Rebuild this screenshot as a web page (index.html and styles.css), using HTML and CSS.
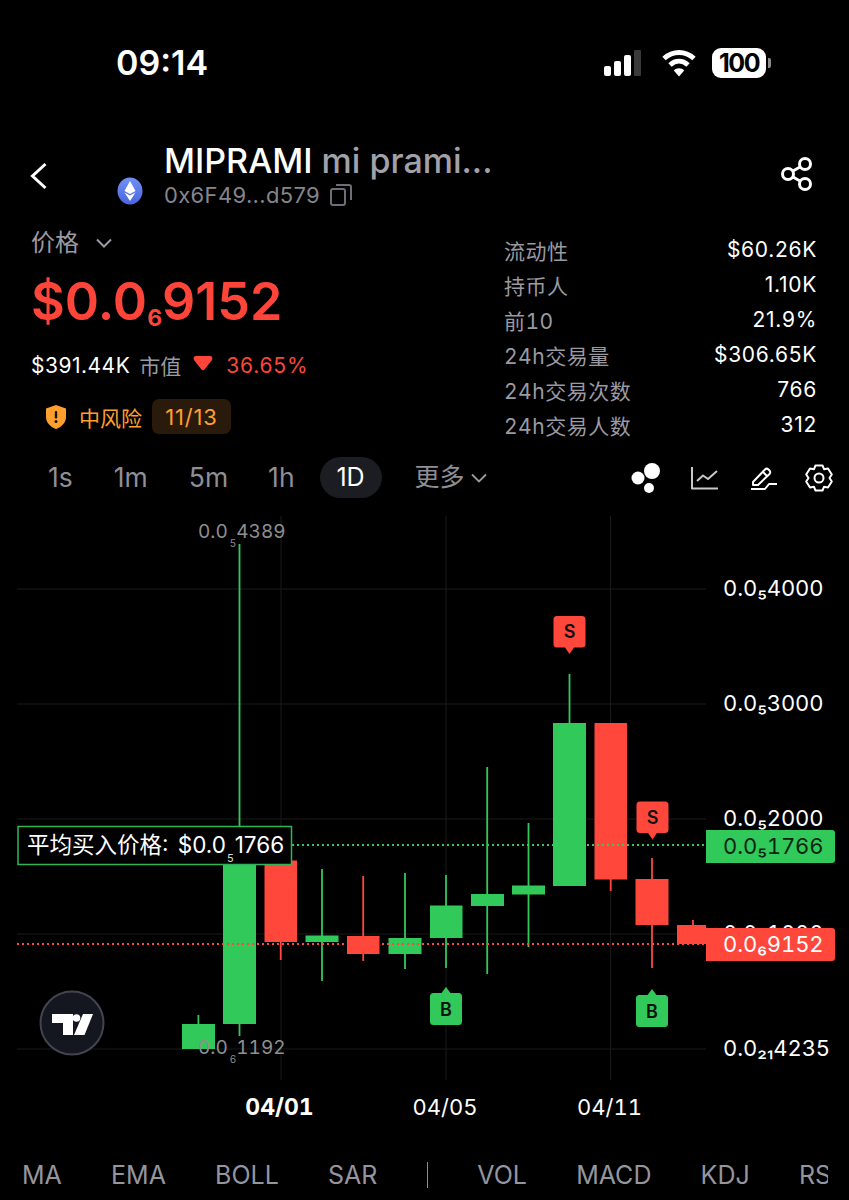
FILE: index.html
```html
<!DOCTYPE html>
<html lang="zh">
<head>
<meta charset="utf-8">
<title>MIPRAMI</title>
<link rel="stylesheet" href="styles.css">
</head>
<body>
<div class="page">
  <div class="status">
    <span class="clock">09:14</span>
    <div class="status-icons">
      <svg class="signal" viewBox="0 0 37 26"><rect x="0" y="16" width="7" height="10" rx="2" class="w"/><rect x="10" y="11" width="7" height="15" rx="2" class="w"/><rect x="20" y="5" width="7" height="21" rx="2" class="w"/><rect x="30" y="0" width="7" height="26" rx="1" class="dim"/></svg>
      <svg class="wifi" viewBox="0 0 36 28"><path class="wifi-s" d="M3 9.500C12 1.500 24 1.500 33 9.500"/><path class="wifi-s" d="M9 16C14.500 11 21.500 11 27 16"/><path class="w" d="M18 27.500L12.800 21.500C15.500 18.500 20.500 18.500 23.200 21.500Z"/></svg>
      <div class="battery"><span class="bat-num">100</span></div><span class="bat-tip"></span>
    </div>
  </div>

  <header class="head">
    <svg class="back" viewBox="0 0 18 28"><path d="M15.500 2L2.500 14L15.500 26"/></svg>
    <svg class="eth" viewBox="0 0 28 28">
      <defs><linearGradient id="ethg" x1="0" y1="0" x2="0" y2="1"><stop offset="0" stop-color="#7290f5"/><stop offset="1" stop-color="#4a66e0"/></linearGradient></defs>
      <ellipse cx="14" cy="14" rx="12.500" ry="13.500" fill="url(#ethg)"/><path class="w" d="M14 4L8.500 14L14 17L19.500 14Z"/><path class="w" d="M14 18.500L8.500 15.500L14 24L19.500 15.500Z"/></svg>
    <div class="head-text">
      <div class="title">MIPRAMI <span class="title-sub">mi prami...</span></div>
      <div class="addr">0x6F49...d579
        <svg class="copy" viewBox="0 0 22 22"><rect x="1" y="5" width="14" height="16" rx="2"/><path d="M6 1H19A2 2 0 0 1 21 3V16"/></svg>
      </div>
    </div>
    <svg class="share" viewBox="0 0 32 34"><circle cx="7" cy="17" r="5.500"/><circle cx="24" cy="7" r="5.500"/><circle cx="24" cy="27" r="5.500"/><path d="M12 14L19 10M12 20L19 24"/></svg>
  </header>

  <section class="info">
    <div class="left">
      <div class="price-label">价格<svg class="chev" viewBox="0 0 16 10"><path d="M1 1.500L8 8.500L15 1.500"/></svg></div>
      <div class="price">$0.0<span class="price-sub">6</span>9152</div>
      <div class="market"><span class="mc">$391.44K</span><span class="mc-label">市值</span><svg class="down" viewBox="0 0 20 16"><path d="M3 1C1 1 0 3 1 5L8.500 14.500C9.300 15.500 10.700 15.500 11.500 14.500L19 5C20 3 19 1 17 1Z"/></svg><span class="pct">36.65%</span></div>
      <div class="risk">
        <svg class="shield" viewBox="0 0 20 24"><path class="shield-bg" d="M10 0L20 3.500V12C20 18 15 22 10 24C5 22 0 18 0 12V3.500Z"/><rect class="shield-m" x="8.800" y="6" width="2.400" height="7.500" rx="1"/><circle class="shield-m" cx="10" cy="16.500" r="1.500"/></svg>
        <span class="risk-text">中风险</span>
        <span class="risk-badge">11/13</span>
      </div>
    </div>
    <dl class="stats">
      <div class="row"><dt>流动性</dt><dd>$60.26K</dd></div>
      <div class="row"><dt>持币人</dt><dd>1.10K</dd></div>
      <div class="row"><dt>前10</dt><dd>21.9%</dd></div>
      <div class="row"><dt>24h交易量</dt><dd>$306.65K</dd></div>
      <div class="row"><dt>24h交易次数</dt><dd>766</dd></div>
      <div class="row"><dt>24h交易人数</dt><dd>312</dd></div>
    </dl>
  </section>

  <nav class="tabs">
    <span class="tab t1">1s</span>
    <span class="tab t2">1m</span>
    <span class="tab t3">5m</span>
    <span class="tab t4">1h</span>
    <span class="tab active">1D</span>
    <span class="tab more">更多<svg class="chev small" viewBox="0 0 16 10"><path d="M1 1.500L8 8.500L15 1.500"/></svg></span>
    <div class="tools">
      <svg class="tool t-dots" viewBox="0 0 30 30"><circle cx="7" cy="15" r="6.500" class="w"/><circle cx="21" cy="8" r="8" class="w"/><circle cx="18" cy="25" r="5" class="w"/></svg>
      <svg class="tool t-line" viewBox="0 0 28 24"><path d="M1 1V22.500H27"/><path d="M6 15L12 9.500L17 13L26 5"/></svg>
      <svg class="tool t-pen" viewBox="0 0 28 24"><path d="M3 16L15 3.500C16 2.500 17.500 2.500 18.500 3.500L19.500 4.500C20.500 5.500 20.500 7 19.500 8L8 19H3Z"/><path d="M13 6L17.500 10.500"/><path d="M1 23H15L19 18H27"/></svg>
      <svg class="tool t-gear" viewBox="0 0 30 30"><path d="M11.500 2.500H18.500L20 6.200L24 5.500L27.800 11.500L25.500 15L27.800 18.500L24 24.500L20 23.800L18.500 27.500H11.500L10 23.800L6 24.500L2.200 18.500L4.500 15L2.200 11.500L6 5.500L10 6.200Z"/><circle cx="15" cy="15" r="4.500"/></svg>
    </div>
  </nav>

  <div class="chart">
    <svg class="chart-svg" viewBox="0 510 849 640">
      <g class="grid">
        <path d="M17 589H706M17 704H706M17 819H706M17 934H706M17 1049H706"/>
        <path d="M281 516V1080M446 516V1080M610.500 516V1080"/>
      </g>

      <g class="up">
        <rect x="197.500" y="1015" width="1.800" height="10"/><rect x="182" y="1024" width="33" height="25"/>
        <rect x="238.600" y="544" width="1.800" height="492"/><rect x="223" y="860" width="33" height="164"/>
        <rect x="321.100" y="869" width="1.800" height="112"/><rect x="305.500" y="935.500" width="33" height="6.500"/>
        <rect x="404.100" y="873" width="1.800" height="96"/><rect x="388.500" y="938" width="33" height="16"/>
        <rect x="445.100" y="875" width="1.800" height="93"/><rect x="430" y="905.500" width="32.500" height="32.500"/>
        <rect x="486.300" y="767" width="1.800" height="207"/><rect x="471" y="894" width="33" height="12"/>
        <rect x="527.600" y="823" width="1.800" height="124"/><rect x="512" y="885.500" width="33" height="9"/>
        <rect x="568.600" y="674" width="1.800" height="50"/><rect x="553" y="723" width="33" height="163"/>
      </g>
      <g class="down-c">
        <rect x="279.800" y="860" width="1.800" height="100"/><rect x="264.500" y="860.500" width="32.500" height="81.500"/>
        <rect x="362.300" y="876" width="1.800" height="85"/><rect x="347" y="936" width="32.500" height="18"/>
        <rect x="609.800" y="723" width="1.800" height="168"/><rect x="594.500" y="723" width="32.500" height="156.500"/>
        <rect x="651.100" y="858" width="1.800" height="110"/><rect x="635.500" y="879" width="33" height="46"/>
        <rect x="692.100" y="920" width="1.800" height="6"/><rect x="677" y="925" width="29" height="19"/>
      </g>

      <path class="dot-g" d="M292 845H706"/>
      <path class="dot-r" d="M17 944H706"/>

      <text class="axis" x="723" y="596">0.0₅4000</text>
      <text class="axis" x="723" y="711">0.0₅3000</text>
      <text class="axis" x="723" y="826">0.0₅2000</text>
      <text class="axis" x="723" y="941">0.0₅1000</text>
      <text class="axis" x="723" y="1056">0.0₂₁4235</text>

      <path class="tag-g" d="M706 830H832A3 3 0 0 1 835 833V860A3 3 0 0 1 832 863H706Z"/>
      <text class="tag-text dark" x="723" y="854">0.0₅1766</text>
      <path class="tag-r" d="M706 928H832A3 3 0 0 1 835 931V958A3 3 0 0 1 832 961H706Z"/>
      <text class="tag-text" x="723" y="952">0.0₆9152</text>

      <rect class="avg-box" x="18" y="826.500" width="273.500" height="38"/>
      <text class="avg" x="27" y="853">平均买入价格: <tspan dx="3">$0.0</tspan><tspan class="tiny" dx="1" dy="9">5</tspan><tspan dx="1" dy="-9">1766</tspan></text>

      <text class="extreme" x="198" y="538">0.0<tspan class="tiny-g" dx="2" dy="9">5</tspan><tspan dy="-9">4389</tspan></text>
      <text class="extreme" x="198" y="1054">0.0<tspan class="tiny-g" dx="2" dy="9">6</tspan><tspan dy="-9">1192</tspan></text>

      <g class="mark-r">
        <path d="M557 616H582A3.500 3.500 0 0 1 585.500 619.500V644A3.500 3.500 0 0 1 582 647.500H574L569.500 654L565 647.500H557A3.500 3.500 0 0 1 553.500 644V619.500A3.500 3.500 0 0 1 557 616Z"/>
        <path d="M640 801.500H665A3.500 3.500 0 0 1 668.500 805V829.500A3.500 3.500 0 0 1 665 833H657L652.500 839.500L648 833H640A3.500 3.500 0 0 1 636.500 829.500V805A3.500 3.500 0 0 1 640 801.500Z"/>
      </g>
      <g class="mark-g">
        <path d="M433.500 993H441.500L446 987L450.500 993H458.500A3.500 3.500 0 0 1 462 996.500V1021.500A3.500 3.500 0 0 1 458.500 1025H433.500A3.500 3.500 0 0 1 430 1021.500V996.500A3.500 3.500 0 0 1 433.500 993Z"/>
        <path d="M639.500 995H647.500L652 989L656.500 995H664.500A3.500 3.500 0 0 1 668 998.500V1023.500A3.500 3.500 0 0 1 664.500 1027H639.500A3.500 3.500 0 0 1 636 1023.500V998.500A3.500 3.500 0 0 1 639.500 995Z"/>
      </g>
      <text class="mark-t" x="569.500" y="638">S</text>
      <text class="mark-t" x="652.500" y="823.500">S</text>
      <text class="mark-t" x="446" y="1015.500">B</text>
      <text class="mark-t" x="652" y="1017.500">B</text>

      <circle class="tv-bg" cx="72" cy="1023" r="31.500"/>
      <path class="w" d="M52 1014H73V1035H63V1023H52Z"/>
      <circle class="w" cx="76.500" cy="1018" r="3.800"/>
      <path class="w" d="M83 1014H93L84.500 1035H74Z"/>

      <text class="xl bold" x="279.500" y="1115">04/01</text>
      <text class="xl" x="445" y="1115">04/05</text>
      <text class="xl" x="609.500" y="1115">04/11</text>
    </svg>
  </div>

  <div class="indicators">
    <span>MA</span><span>EMA</span><span>BOLL</span><span>SAR</span><i class="divider"></i><span>VOL</span><span>MACD</span><span>KDJ</span><span>RSI</span>
  </div>
</div>
</body>
</html>
```
FILE: styles.css
```css
* { box-sizing: border-box; margin: 0; padding: 0; }
html, body { background: #000; }
body { font-family: Inter, "Noto Sans CJK SC", sans-serif; color: #fff; }
.page { width: 849px; height: 1200px; overflow: hidden; position: relative; display: flex; flex-direction: column; }
.w { fill: #fff; }

.status { height: 140px; padding: 45px 78px 0 116px; display: flex; justify-content: space-between; align-items: flex-start; }
.clock { font-size: 34px; font-weight: 600; line-height: 36px; }
.status-icons { display: flex; align-items: center; gap: 0; height: 36px; }
.signal { width: 37px; height: 26px; margin-right: 20px; }
.signal .dim { fill: #3a3a3c; }
.wifi { width: 36px; height: 28px; margin-right: 15px; }
.wifi-s { fill: none; stroke: #fff; stroke-width: 5; }
.battery { width: 54px; height: 30px; background: #fff; border-radius: 9px; display: flex; align-items: center; justify-content: center; }
.bat-num { color: #000; font-size: 25px; font-weight: 700; letter-spacing: -1.5px; }
.bat-tip { width: 3px; height: 10px; background: #8c8c8c; border-radius: 0 2px 2px 0; margin-left: 2px; }

.head { position: relative; height: 72px; display: flex; padding-left: 164px; }
.back { position: absolute; left: 30px; top: 22px; width: 18px; height: 28px; fill: none; stroke: #fff; stroke-width: 3; }
.eth { position: absolute; left: 116px; top: 37px; width: 28px; height: 28px; }
.head-text { flex: 1; }
.title { font-size: 34px; font-weight: 500; line-height: 42px; }
.title-sub { color: #a1a1aa; font-weight: 500; }
.addr { color: #85858d; font-size: 22px; line-height: 28px; display: flex; align-items: center; gap: 10px; margin-top: -1px; letter-spacing: 0.35px; }
.copy { width: 22px; height: 22px; fill: none; stroke: #6e6e75; stroke-width: 2; }
.share { position: absolute; left: 781px; top: 17px; width: 32px; height: 34px; fill: none; stroke: #fff; stroke-width: 3; }

.info { height: 233px; padding: 16px 32px 0 31px; display: flex; justify-content: space-between; }
.left { width: 360px; }
.price-label { color: #9a9aa2; font-size: 24px; line-height: 30px; display: flex; align-items: center; gap: 17px; }
.chev { width: 16px; height: 10px; fill: none; stroke: #9a9aa2; stroke-width: 2; }
.price { color: #ff453a; font-size: 52px; font-weight: 600; line-height: 62px; margin-top: 13px; }
.price-sub { font-size: 23px; font-weight: 700; position: relative; top: 6px; }
.market { display: flex; align-items: center; height: 30px; margin-top: 7px; font-size: 21px; }
.mc { letter-spacing: 0.5px; }
.mc-label { color: #9a9aa2; margin-left: 9px; }
.down { width: 20px; height: 16px; margin-left: 12px; fill: #ff453a; margin-bottom: 4px; }
.pct { color: #ff453a; margin-left: 13px; letter-spacing: 0.8px; }
.risk { display: flex; align-items: center; margin-top: 19px; margin-left: 15px; height: 35px; }
.shield { width: 20px; height: 24px; }
.shield-bg { fill: #ff9f2e; }
.shield-m { fill: #1a1000; }
.risk-text { color: #ff9f2e; font-size: 21px; margin-left: 13px; }
.risk-badge { color: #ff9f2e; background: #2a1a0c; font-size: 22px; border-radius: 7px; height: 35px; width: 79px; margin-left: 10px; display: flex; align-items: center; justify-content: center; letter-spacing: 0.8px; }

.stats { width: 313px; padding-top: 4px; }
.row { display: flex; justify-content: space-between; height: 35px; align-items: center; font-size: 21px; }
dt { color: #9a9aa2; letter-spacing: 0.5px; font-variant-numeric: tabular-nums; }
dd { color: #fff; letter-spacing: 0.7px; }

.tabs { height: 65px; display: flex; align-items: flex-start; padding: 12px 15px 0 0; font-size: 26.500px; color: #8e8e96; position: relative; }
.tab { line-height: 41px; }
.t1 { margin-left: 48px; }
.t2 { margin-left: 41px; }
.t3 { margin-left: 41px; }
.t4 { margin-left: 40px; }
.active { margin-left: 25px; width: 62px; height: 41px; text-align: center; border-radius: 21px; background: #1c1d22; color: #fff; font-size: 25px; }
.more { margin-left: 33px; display: flex; align-items: center; gap: 6px; font-size: 25px; }
.chev.small { stroke-width: 1.8; }
.tools { margin-left: auto; display: flex; align-items: center; height: 41px; gap: 0; }
.tool { display: block; }
.t-dots { width: 30px; height: 30px; margin-right: 30px; }
.t-line, .t-pen, .t-gear { fill: none; stroke: #fff; stroke-width: 2; stroke-linejoin: round; }
.t-line { width: 28px; height: 24px; margin-right: 31px; stroke: #c9c9c9; }
.t-pen { width: 28px; height: 24px; margin-right: 26px; }
.t-gear { width: 30px; height: 30px; }

.chart { height: 640px; flex: none; }
.chart-svg { display: block; width: 849px; height: 640px; }
.grid path { fill: none; stroke: #1a1a1a; stroke-width: 1; }
.up rect { fill: #30c95a; }
.down-c rect { fill: #ff473b; }
.dot-g { stroke: #30c95a; stroke-width: 2; stroke-dasharray: 2 3; fill: none; }
.dot-r { stroke: #ff473b; stroke-width: 2; stroke-dasharray: 2 3; fill: none; }
.axis, .tag-text { font-family: Inter, sans-serif; font-size: 22px; fill: #fff; font-variant-numeric: tabular-nums; letter-spacing: -0.1px; }
.tag-text.dark { fill: #0a2412; }
.tag-g { fill: #30c95a; }
.tag-r { fill: #ff473b; }
.avg-box { fill: #000; stroke: #30b45a; stroke-width: 1.5; }
.avg { font-family: Inter, "Noto Sans CJK SC", sans-serif; font-size: 22.500px; fill: #fff; }
.tiny { font-size: 11px; fill: #ddd; }
.tiny-g { font-size: 10px; fill: #8f8f8f; }
.extreme { font-family: Inter, sans-serif; font-size: 19px; fill: #8f8f8f; font-variant-numeric: tabular-nums; }
.mark-r path { fill: #ff473b; }
.mark-g path { fill: #30c95a; }
.mark-t { font-family: Inter, sans-serif; font-size: 18px; font-weight: 600; fill: #111; text-anchor: middle; }
.tv-bg { fill: #141620; stroke: #42444f; stroke-width: 2; }
.xl { font-family: Inter, sans-serif; font-size: 22px; fill: #fff; text-anchor: middle; font-variant-numeric: tabular-nums; }
.xl.bold { font-weight: 700; font-size: 23px; }

.indicators { flex: none; margin-left: 22px; width: 806px; height: 50px; overflow: hidden; display: flex; align-items: center; gap: 49.200px; font-size: 25px; color: #95959d; white-space: nowrap; }
.divider { display: block; width: 1.500px; height: 26px; background: #8e8e96; flex: none; }
```
